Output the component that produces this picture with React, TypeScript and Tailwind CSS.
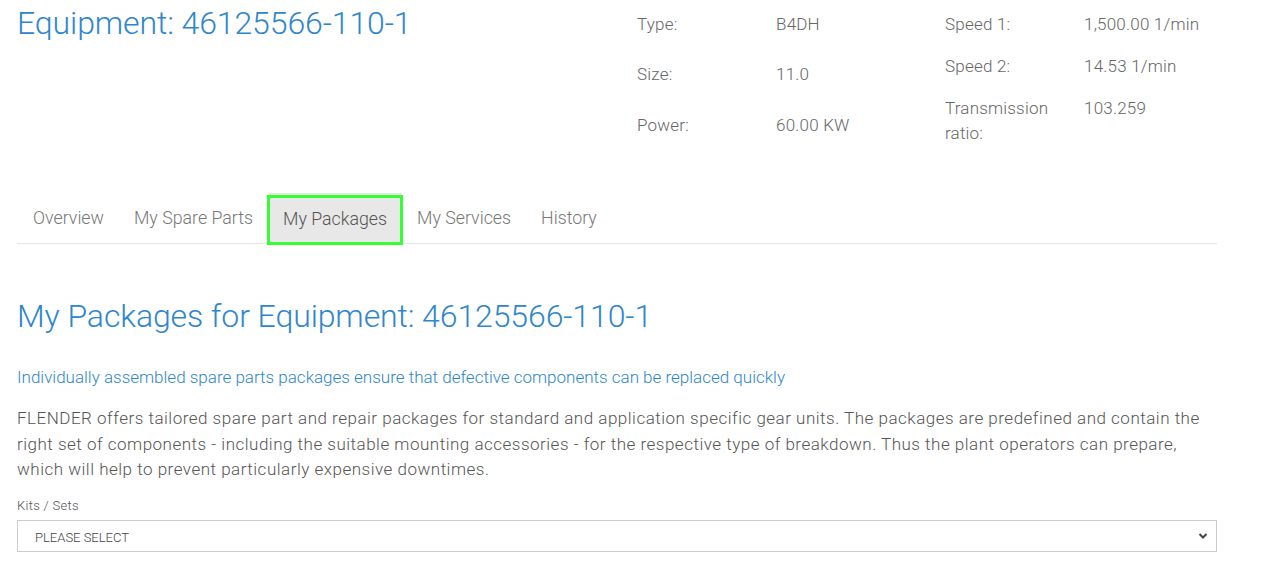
import React from "react";

const blue = "text-[#2e86cf]";

function Spec({ label, value, h }: { label: React.ReactNode; value: string; h: string }) {
  return (
    <div className={`flex ${h}`}>
      <div className="w-[139px] shrink-0">{label}</div>
      <div>{value}</div>
    </div>
  );
}

export default function App() {
  return (
    <div className="w-[1266px] h-[583px] bg-white overflow-hidden font-['Roboto',sans-serif] text-[#666]">
      <div className="w-[1200px] ml-[17px]">
        <div className="flex h-[185px]">
          <div className="flex-1 pt-[3px]">
            <h1 className={`${blue} text-[32px] font-light leading-[40px] tracking-[-0.1px]`}>Equipment: 46125566-110-1</h1>
          </div>
          <div className="w-[308px] pt-[12px] text-[17px] leading-[25px] font-light tracking-[0.2px]">
            <Spec label="Type:" value="B4DH" h="h-[50px]" />
            <Spec label="Size:" value="11.0" h="h-[51px]" />
            <Spec label="Power:" value="60.00 KW" h="h-[50px]" />
          </div>
          <div className="w-[272px] pt-[12px] text-[17px] leading-[25px] font-light tracking-[0.2px]">
            <Spec label="Speed 1:" value="1,500.00 1/min" h="h-[42px]" />
            <Spec label="Speed 2:" value="14.53 1/min" h="h-[42px]" />
            <Spec label={<span>Transmission<br />ratio:</span>} value="103.259" h="h-[50px]" />
          </div>
        </div>
        <div className="flex items-end border-b border-[#e6e6e6] h-[59px] text-[17.8px] font-light text-[#777]">
          <div className="pl-[16px] pr-[15px] h-[49px] flex items-center">Overview</div>
          <div className="pl-[15px] pr-[14px] h-[49px] flex items-center">My Spare Parts</div>
          <div className="px-[13px] h-[50px] -mb-[2px] pb-[2px] flex items-center bg-[#e8e8e8] border-[3px] border-[#33ff33] text-[#555] shadow-[0_-4px_0_-2px_#e8e8e8]">My Packages</div>
          <div className="pl-[14px] pr-[15px] h-[49px] flex items-center">My Services</div>
          <div className="px-[15px] h-[49px] flex items-center">History</div>
        </div>
        <h2 className={`${blue} text-[32px] font-light leading-[40px] mt-[52px] tracking-[-0.1px]`}>My Packages for Equipment: 46125566-110-1</h2>
        <p className={`${blue} text-[17px] font-light leading-[24px] mt-[29px]`}>Individually assembled spare parts packages ensure that defective components can be replaced quickly</p>
        <p className="text-[17px] font-light leading-[25.5px] mt-[17px] text-[#555] tracking-[0.5px]">
          FLENDER offers tailored spare part and repair packages for standard and application specific gear units. The packages are predefined and contain the right set of components - including the suitable mounting accessories - for the respective type of breakdown. Thus the plant operators can prepare, which will help to prevent particularly expensive downtimes.
        </p>
        <div className="text-[13px] font-light text-[#555] mt-[14px] leading-[18px] tracking-[0.3px]">Kits / Sets</div>
        <div className="mt-[5px] h-[32px] border border-[#cccccc] flex items-center justify-between pl-[17px] pr-[8px] pt-[4px] text-[13px] font-light text-[#444]">
          <span>PLEASE SELECT</span>
          <svg className="-mt-[4px]" width="10" height="8" viewBox="0 0 10 8"><path d="M1.5 2 L5 5.5 L8.5 2" stroke="#444" strokeWidth="2" fill="none" /></svg>
        </div>
      </div>
    </div>
  );
}
